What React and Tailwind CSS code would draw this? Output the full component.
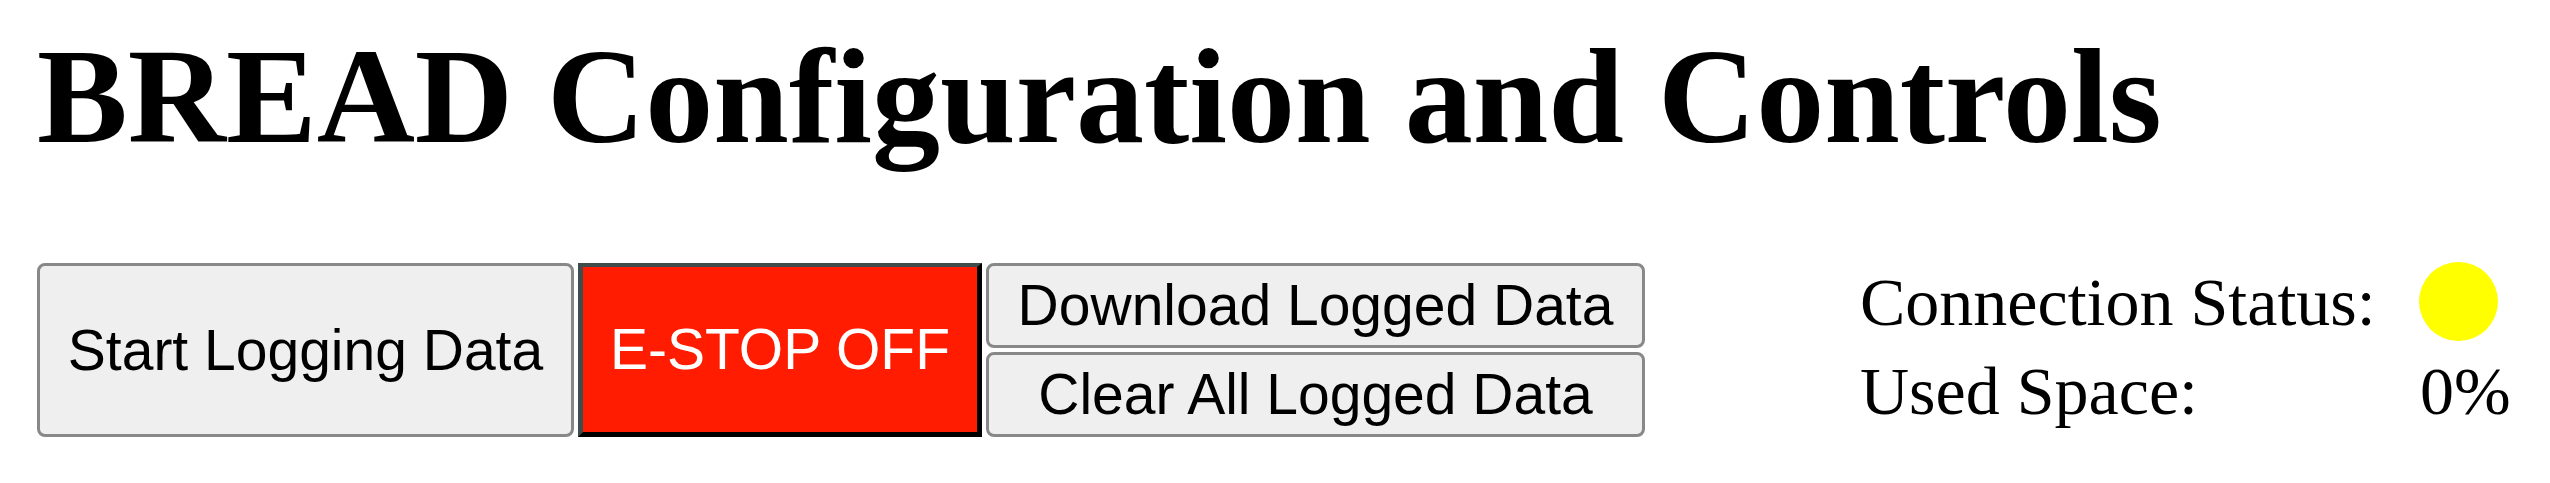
export default function App() {
  return (
    <div className="w-[2550px] h-[483px] bg-white pl-[37px] text-black font-['Liberation_Serif',serif]">
      <h1 className="pt-[28px] h-[164px] text-[136px] leading-none font-bold">
        BREAD Configuration and Controls
      </h1>

      <div className="mt-[99px] flex items-start">
        <div className="flex h-[174px] gap-[4px] font-['Liberation_Sans',Arial,sans-serif] text-[57px] leading-none">
          <button className="flex w-[537px] h-full items-center justify-center rounded-[8px] border-[3px] border-[#888888] bg-[#efefef] text-black">
            Start Logging Data
          </button>
          <button className="flex w-[404px] h-full items-center justify-center border-t-[4px] border-l-[5px] border-r-[5px] border-b-[5px] border-t-[#3f4c4c] border-l-[#3f4c4c] border-r-black border-b-black bg-[#ff1c00] text-white">
            E-STOP OFF
          </button>
          <div className="flex w-[659px] flex-col gap-[4px]">
            <button className="flex h-[85px] items-center justify-center rounded-[8px] border-[3px] border-[#888888] bg-[#efefef] text-black">
              Download Logged Data
            </button>
            <button className="flex h-[85px] items-center justify-center rounded-[8px] border-[3px] border-[#888888] bg-[#efefef] text-black">
              Clear All Logged Data
            </button>
          </div>
        </div>

        <div className="ml-[215px] -mt-[6px] grid grid-cols-[559px_auto] text-[68px] leading-none">
          <div className="flex h-[89px] items-center">Connection Status:</div>
          <div className="flex h-[89px] items-center">
            <div className="h-[79px] w-[79px] rounded-full bg-[#ffff00]" />
          </div>
          <div className="flex h-[89px] items-center">Used Space:</div>
          <div className="flex h-[89px] items-center pl-[1px]">0%</div>
        </div>
      </div>
    </div>
  );
}
